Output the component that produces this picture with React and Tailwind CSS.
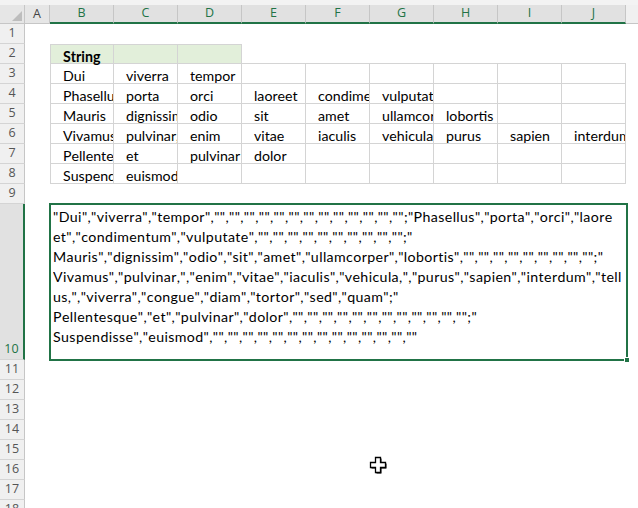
import React from "react";

// sheet data, row 1..8 (col B onwards)
const rows = [
  [],
  ["String", "", ""],
  ["Dui", "viverra", "tempor"],
  ["Phasellus", "porta", "orci", "laoreet", "condimentum", "vulputate"],
  ["Mauris", "dignissim", "odio", "sit", "amet", "ullamcorper", "lobortis"],
  ["Vivamus", "pulvinar,", "enim", "vitae", "iaculis", "vehicula,", "purus", "sapien", "interdum"],
  ["Pellentesque", "et", "pulvinar", "dolor"],
  ["Suspendisse", "euismod"],
];

const cols = ["B", "C", "D", "E", "F", "G", "H", "I", "J"];

const blanks = (n) => Array(n).fill('""').join(",");

const joined = [
  `"Dui","viverra","tempor",${blanks(13)};"Phasellus","porta","orci","laore`,
  `et","condimentum","vulputate",${blanks(10)};"`,
  `Mauris","dignissim","odio","sit","amet","ullamcorper","lobortis",${blanks(9)};"`,
  `Vivamus","pulvinar,","enim","vitae","iaculis","vehicula,","purus","sapien","interdum","tell`,
  `us,","viverra","congue","diam","tortor","sed","quam";"`,
  `Pellentesque","et","pulvinar","dolor",${blanks(12)};"`,
  `Suspendisse","euismod",${blanks(14)}`,
];

const RowHead = ({ n, active, tall }) => (
  <div
    className={`w-[25px] shrink-0 flex justify-center text-[12.5px] font-['Open_Sans',sans-serif] border-b border-[#d4d4d4] ${
      active
        ? "bg-[#e1e1e1] text-[#217346] border-r-2 border-r-[#217346] items-end"
        : "bg-[#f0f0f0] text-[#555] border-r border-r-[#c6c6c6] items-center"
    } ${tall ? "h-[156px]" : "h-5"}`}
  >
    {n}
  </div>
);

const Cursor = () => (
  <svg className="absolute left-[369px] top-[456px]" width="18" height="18" viewBox="0 0 18 18">
    <path d="M6.5 1.5h5v5h5v5h-5v5h-5v-5h-5v-5h5z" fill="#000" transform="translate(1 1)" />
    <path d="M6.5 1.5h5v5h5v5h-5v5h-5v-5h-5v-5h5z" fill="#fff" stroke="#000" strokeWidth="1.3" />
  </svg>
);

export default function App() {
  return (
    <div className="relative w-[638px] h-[508px] overflow-hidden bg-white font-['Lato',sans-serif] text-black [font-kerning:none]">
      <div className="h-[5px] bg-[#f3f3f3]" />
      {/* column headers */}
      <div className="flex h-[19px] font-['Open_Sans',sans-serif] text-[12.5px]">
        <div className="relative w-[25px] shrink-0 bg-[#e6e6e6] border-r border-[#c6c6c6] border-b border-b-[#c6c6c6]">
          <div className="absolute right-[2px] bottom-[2px] w-0 h-0 border-l-[10px] border-l-transparent border-b-[10px] border-b-[#bdbdbd]" />
        </div>
        <div className="w-[25px] shrink-0 bg-[#e6e6e6] text-[#444] flex items-center justify-center border-r border-[#c6c6c6] border-b border-b-[#c6c6c6]">
          A
        </div>
        {cols.map((c) => (
          <div
            key={c}
            className="w-16 shrink-0 bg-[#e1e1e1] text-[#217346] flex items-center justify-center border-r border-[#c6c6c6] border-b-2 border-b-[#217346]"
          >
            {c}
          </div>
        ))}
        <div className="flex-1 bg-[#f0f0f0] border-b border-b-[#c6c6c6]" />
      </div>

      {/* rows 1-9 */}
      {rows.concat([[]]).map((r, i) => {
        const n = i + 1;
        return (
          <div key={n} className="flex h-5">
            <RowHead n={n} />
            <div className="w-[25px] shrink-0" />
            {n >= 2 && n <= 8 &&
              cols.map((c, j) => {
                const head = n === 2;
                const boxed = !head || j < 3;
                return (
                  <div
                    key={c}
                    className={`w-16 shrink-0 h-5 overflow-x-clip whitespace-nowrap pl-3 text-[14.2px] leading-[23px] border-b border-[#d4d4d4] ${
                      boxed ? "border-r" : ""
                    } ${head && j < 3 ? "border-t bg-[#e2efda] font-bold leading-[21px]" : ""} ${
                      j === 0 ? "border-l" : ""
                    }`}
                  >
                    {r[j] || ""}
                  </div>
                );
              })}
          </div>
        );
      })}

      {/* row 10: selected range B10:J10 */}
      <div className="flex h-[156px]">
        <RowHead n={10} active tall />
        <div className="w-[25px] shrink-0" />
        <div className="relative w-[576px] shrink-0 pt-[3px] pl-[3px] text-[14.2px] leading-[20px] tracking-[0.38px]">
          {joined.map((l, i) => (
            <div key={i} className="whitespace-nowrap overflow-hidden">
              {l}
            </div>
          ))}
          <div className="absolute -left-[1px] -top-[1px] w-[579px] h-[158px] border-2 border-[#217346]" />
          <div className="absolute left-[574px] top-[153px] w-[6px] h-[6px] bg-[#217346] border border-white" />
        </div>
      </div>

      {/* rows 11-18 */}
      {[11, 12, 13, 14, 15, 16, 17, 18].map((n) => (
        <div key={n} className="flex h-5">
          <RowHead n={n} />
        </div>
      ))}

      <Cursor />
    </div>
  );
}
